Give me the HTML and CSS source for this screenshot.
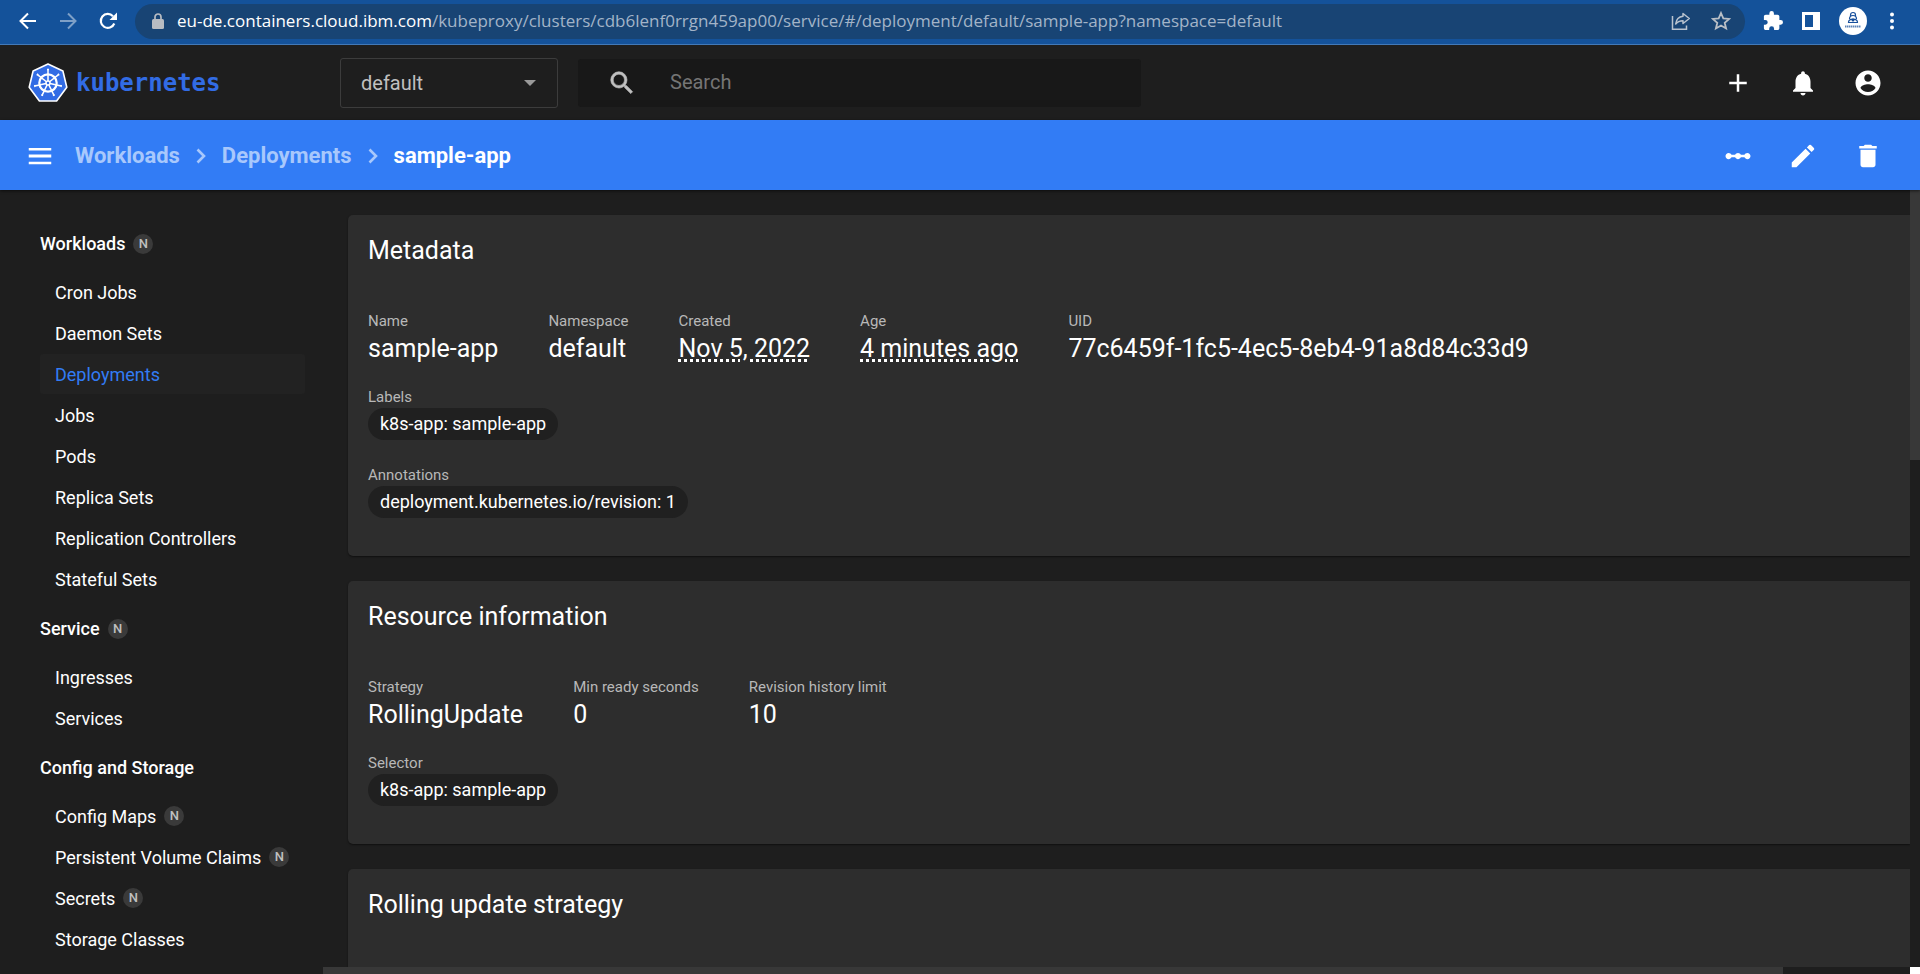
FILE: index.html
```html
<!DOCTYPE html>
<html lang="en">
<head>
<meta charset="utf-8">
<title>sample-app - Kubernetes Dashboard</title>
<link rel="stylesheet" href="styles.css">
</head>
<body>
<div class="browser">
  <div class="browser-nav">
    <button class="bare" aria-label="Back"><svg width="20" height="20" viewBox="0 0 20 20" fill="none" stroke="#fff" stroke-width="2"><path d="M18 10H3M10 2.500L2.500 10L10 17.500"/></svg></button>
    <button class="bare faded" aria-label="Forward"><svg width="20" height="20" viewBox="0 0 20 20" fill="none" stroke="#fff" stroke-width="2"><path d="M2 10H17M10 2.500L17.500 10L10 17.500"/></svg></button>
    <button class="bare" aria-label="Reload"><svg width="20" height="20" viewBox="0 0 20 20"><path d="M16.300 12.500A7 7 0 1 1 15 5.200" fill="none" stroke="#fff" stroke-width="2.200"/><path d="M19 1.500V9H11.500z" fill="#fff"/></svg></button>
  </div>
  <div class="omnibox">
    <svg width="12" height="16" viewBox="0 0 12 16"><rect y="6" width="12" height="10" rx="1.500" fill="#b8bcc2"/><path d="M3 7V4a3 3 0 0 1 6 0v3" fill="none" stroke="#b8bcc2" stroke-width="1.700"/></svg>
    <span class="url"><span class="host">eu-de.containers.cloud.ibm.com</span>/kubeproxy/clusters/cdb6lenf0rrgn459ap00/service/#/deployment/default/sample-app?namespace=default</span>
    <button class="bare" aria-label="Share"><svg width="20" height="20" viewBox="0 0 20 20" fill="none" stroke="#b9c3cf" stroke-width="1.500"><path d="M1.500 5V18.200H15.500V14.500"/><path d="M12 2.500L18.300 7.500L12 12.500V9.700C8.500 9.700 6.500 10.500 4.700 13C5.200 8.800 8 5.700 12 5.300z" stroke-linejoin="round"/></svg></button>
    <button class="bare" aria-label="Bookmark"><svg width="20" height="20" viewBox="0 0 20 20"><path d="M10 2L12.300 7.400L18.200 7.900L13.700 11.800L15.100 17.500L10 14.500L4.900 17.500L6.300 11.800L1.800 7.900L7.700 7.400z" fill="none" stroke="#b9bfc6" stroke-width="1.800"/></svg></button>
  </div>
  <div class="browser-tools">
    <button class="bare" aria-label="Extensions"><svg width="20" height="20" viewBox="1 1 22 22" fill="#fff"><path d="M20.500 11H19V7c0-1.100-.9-2-2-2h-4V3.500a2.500 2.500 0 0 0-5 0V5H4c-1.100 0-2 .9-2 2v3.800h1.500a2.700 2.700 0 0 1 0 5.400H2V20c0 1.100.9 2 2 2h3.800v-1.500a2.700 2.700 0 0 1 5.400 0V22H17c1.100 0 2-.9 2-2v-4h1.500a2.500 2.500 0 0 0 0-5z"/></svg></button>
    <button class="bare" aria-label="Side panel"><svg width="18" height="18" viewBox="0 0 18 18"><path d="M0 0H18V18H0zM3 3V15H11V3z" fill="#fff" fill-rule="evenodd"/></svg></button>
    <button class="bare" aria-label="Profile"><svg width="28" height="28" viewBox="0 0 28 28"><circle cx="14" cy="14" r="14" fill="#fff"/><path d="M11.500 9V8a2.500 2.500 0 0 1 5 0V9M10.500 12a3.500 3.500 0 0 1 7 0M9.500 15.500C9.500 11 18.500 11 18.500 15.500z" fill="none" stroke="#174f9c" stroke-width="1.200"/><circle cx="14" cy="13" r="1.500" fill="#174f9c"/><path d="M6 19.500H22" stroke="#5c83b8" stroke-width="2" stroke-dasharray="1.500 .5"/></svg></button>
    <button class="bare menu" aria-label="Menu"><svg width="6" height="18" viewBox="0 0 6 18" fill="#fff"><circle cx="3" cy="2.500" r="2"/><circle cx="3" cy="9" r="2"/><circle cx="3" cy="15.500" r="2"/></svg></button>
  </div>
</div>

<header class="header">
  <a class="brand" href="#">
    <svg width="42" height="42" viewBox="-21 -21 42 42">
      <path d="M0 -19L14.900 -12L18.800 4.200L8.600 18H-8.600L-18.800 4.200L-14.900 -12z" fill="#326ce5" stroke="#fff" stroke-width="1.600" stroke-linejoin="round"/>
      <g stroke="#fff" fill="none">
        <circle r="8.700" stroke-width="2.200"/>
        <g stroke-width="1.500"><path id="spoke" d="M0 -2V-13.500M-1 -13.500H1"/><use href="#spoke" transform="rotate(51.430)"/><use href="#spoke" transform="rotate(102.860)"/><use href="#spoke" transform="rotate(154.290)"/><use href="#spoke" transform="rotate(205.710)"/><use href="#spoke" transform="rotate(257.140)"/><use href="#spoke" transform="rotate(308.570)"/></g>
        <circle r="2" stroke-width="1.500"/>
      </g>
    </svg>
    <span>kubernetes</span>
  </a>
  <div class="select-wrap">
    <select class="namespace" aria-label="Namespace"><option>default</option></select>
    <svg class="caret" width="12" height="6" viewBox="0 0 12 6"><path d="M0 0H12L6 6z" fill="#9a9a9a"/></svg>
  </div>
  <div class="search">
    <svg width="30" height="30" viewBox="0 0 24 24" fill="#c0c0c0" stroke="#c0c0c0" stroke-width=".5"><path d="M15.500 14h-.79l-.28-.27A6.470 6.470 0 0 0 16 9.500 6.500 6.500 0 1 0 9.500 16c1.610 0 3.090-.59 4.230-1.570l.27.28v.79l5 4.990L20.490 19l-4.990-5zm-6 0C7.010 14 5 11.990 5 9.500S7.010 5 9.500 5 14 7.010 14 9.500 11.990 14 9.500 14z"/></svg>
    <input type="search" placeholder="Search" aria-label="Search">
  </div>
  <div class="actions">
    <button class="bare" aria-label="Create"><svg width="30" height="30" viewBox="0 0 24 24" fill="#fff"><path d="M19 13h-6v6h-2v-6H5v-2h6V5h2v6h6v2z"/></svg></button>
    <button class="bare" aria-label="Notifications"><svg width="30" height="30" viewBox="0 0 24 24" fill="#fff"><path d="M12 22c1.100 0 2-.9 2-2h-4c0 1.100.89 2 2 2zm6-6v-5c0-3.070-1.640-5.640-4.500-6.320V4c0-.83-.67-1.500-1.500-1.500s-1.500.67-1.500 1.500v.68C7.630 5.360 6 7.920 6 11v5l-2 2v1h16v-1l-2-2z"/></svg></button>
    <button class="bare" aria-label="Account"><svg width="30" height="30" viewBox="0 0 24 24" fill="#fff"><path d="M12 2C6.480 2 2 6.480 2 12s4.480 10 10 10 10-4.480 10-10S17.520 2 12 2zm0 3c1.660 0 3 1.340 3 3s-1.340 3-3 3-3-1.340-3-3 1.340-3 3-3zm0 14.200c-2.500 0-4.710-1.280-6-3.220.03-1.990 4-3.080 6-3.080 1.990 0 5.970 1.090 6 3.080-1.290 1.940-3.500 3.220-6 3.220z"/></svg></button>
  </div>
</header>

<div class="toolbar">
  <button class="bare" aria-label="Toggle navigation"><svg width="30" height="30" viewBox="0 0 24 24" fill="#fff"><path d="M3 18.500h18v-2H3v2zm0-5.250h18v-2.500H3v2.500zm0-7.750v2h18V5.500H3z"/></svg></button>
  <nav class="crumbs" aria-label="Breadcrumb">
    <a href="#">Workloads</a>
    <svg width="10" height="16" viewBox="0 0 10 16"><path d="M1.500 1.500L8 8L1.500 14.500" fill="none" stroke="#a8c8fc" stroke-width="2.600"/></svg>
    <a href="#">Deployments</a>
    <svg width="10" height="16" viewBox="0 0 10 16"><path d="M1.500 1.500L8 8L1.500 14.500" fill="none" stroke="#a8c8fc" stroke-width="2.600"/></svg>
    <span class="current">sample-app</span>
  </nav>
  <div class="actions">
    <button class="bare" aria-label="Scale"><svg width="30" height="30" viewBox="0 0 24 24" fill="#fff"><path d="M19.500 9.500c-1.030 0-1.900.62-2.290 1.500h-2.920c-.39-.88-1.260-1.500-2.290-1.500s-1.900.62-2.290 1.500H6.790c-.39-.88-1.260-1.500-2.290-1.500C3.120 9.500 2 10.620 2 12s1.120 2.500 2.500 2.500c1.030 0 1.900-.62 2.290-1.500h2.920c.39.88 1.260 1.500 2.290 1.500s1.900-.62 2.290-1.500h2.920c.39.88 1.260 1.500 2.290 1.500 1.380 0 2.500-1.120 2.500-2.500s-1.120-2.500-2.500-2.500z"/></svg></button>
    <button class="bare" aria-label="Edit"><svg width="30" height="30" viewBox="0 0 24 24" fill="#fff"><path d="M3 17.250V21h3.750L17.810 9.940l-3.750-3.750L3 17.250zM20.710 7.040a1 1 0 0 0 0-1.410l-2.340-2.340a1 1 0 0 0-1.410 0l-1.830 1.830 3.750 3.750 1.830-1.830z"/></svg></button>
    <button class="bare" aria-label="Delete"><svg width="30" height="30" viewBox="0 0 24 24" fill="#fff"><path d="M6 19c0 1.100.9 2 2 2h8c1.100 0 2-.9 2-2V7H6v12zM19 4h-3.500l-1-1h-5l-1 1H5v2h14V4z"/></svg></button>
  </div>
</div>

<div class="page">
  <nav class="sidebar" aria-label="Resources">
    <section>
      <a class="group" href="#">Workloads <span class="badge">N</span></a>
      <a class="item" href="#">Cron Jobs</a>
      <a class="item" href="#">Daemon Sets</a>
      <a class="item active" href="#">Deployments</a>
      <a class="item" href="#">Jobs</a>
      <a class="item" href="#">Pods</a>
      <a class="item" href="#">Replica Sets</a>
      <a class="item" href="#">Replication Controllers</a>
      <a class="item" href="#">Stateful Sets</a>
    </section>
    <section>
      <a class="group" href="#">Service <span class="badge">N</span></a>
      <a class="item" href="#">Ingresses</a>
      <a class="item" href="#">Services</a>
    </section>
    <section>
      <a class="group" href="#">Config and Storage</a>
      <a class="item" href="#">Config Maps <span class="badge">N</span></a>
      <a class="item" href="#">Persistent Volume Claims <span class="badge">N</span></a>
      <a class="item" href="#">Secrets <span class="badge">N</span></a>
      <a class="item" href="#">Storage Classes</a>
    </section>
  </nav>

  <div class="view">
    <main class="cards">
      <section class="card">
        <h2>Metadata</h2>
        <dl class="props">
          <div><dt>Name</dt><dd>sample-app</dd></div>
          <div><dt>Namespace</dt><dd>default</dd></div>
          <div><dt>Created</dt><dd><span class="hint">Nov 5, 2022</span></dd></div>
          <div><dt>Age</dt><dd><span class="hint">4 minutes ago</span></dd></div>
          <div><dt>UID</dt><dd>77c6459f-1fc5-4ec5-8eb4-91a8d84c33d9</dd></div>
        </dl>
        <dl class="tags">
          <div><dt>Labels</dt><dd><span class="chip">k8s-app: sample-app</span></dd></div>
          <div><dt>Annotations</dt><dd><span class="chip">deployment.kubernetes.io/revision: 1</span></dd></div>
        </dl>
      </section>
      <section class="card">
        <h2>Resource information</h2>
        <dl class="props">
          <div><dt>Strategy</dt><dd>RollingUpdate</dd></div>
          <div><dt>Min ready seconds</dt><dd>0</dd></div>
          <div><dt>Revision history limit</dt><dd>10</dd></div>
        </dl>
        <dl class="tags">
          <div><dt>Selector</dt><dd><span class="chip">k8s-app: sample-app</span></dd></div>
        </dl>
      </section>
      <section class="card rest">
        <h2>Rolling update strategy</h2>
      </section>
    </main>
    <div class="scroll-x"><div class="thumb"></div></div>
  </div>

  <div class="scroll-y"><div class="thumb"></div><div class="corner"></div></div>
</div>
</body>
</html>
```
FILE: styles.css
```css
* {
  box-sizing: border-box;
}

body {
  margin: 0;
  height: 100vh;
  display: flex;
  flex-direction: column;
  overflow: hidden;
  background: #1e1e1e;
  color: #fff;
  font-family: Roboto, "Liberation Sans", sans-serif;
  font-size: 18px;
}

a {
  color: inherit;
  text-decoration: none;
}

svg {
  display: block;
  flex: none;
}

.bare {
  padding: 0;
  border: 0;
  background: none;
  color: inherit;
}

/* Browser bar */
.browser {
  flex: none;
  display: flex;
  align-items: center;
  height: 45px;
  padding: 0 25px 2px 18px;
  background: #14529a;
  border-bottom: 1px solid #4279b8;
}

.browser-nav {
  display: flex;
  gap: 20px;
  margin-right: 17px;
}

.faded {
  opacity: 0.45;
}

.omnibox {
  flex: 1;
  display: flex;
  align-items: center;
  gap: 20px;
  height: 35px;
  padding: 0 14px 0 17px;
  border-radius: 18px;
  background: #184474;
}

.url {
  flex: 1;
  margin-left: -7px;
  font-family: "Open Sans", "Noto Sans", sans-serif;
  font-size: 17px;
  line-height: 24px;
  color: #a3b4c8;
  white-space: nowrap;
}

.host {
  color: #fff;
}

.browser-tools {
  display: flex;
  align-items: center;
  gap: 19px;
  margin-left: 18px;
}

.menu {
  margin-left: 3px;
}

/* Application header */
.header,
.toolbar {
  flex: none;
  display: flex;
  align-items: center;
  padding: 0 37px 0 27px;
}

.header {
  height: 75px;
}

.brand {
  display: flex;
  align-items: center;
  gap: 7px;
  width: 313px;
  color: #326ce5;
  font: bold 24px "DejaVu Sans Mono", monospace;
}

.select-wrap {
  position: relative;
  width: 218px;
  margin-right: 20px;
}

.namespace {
  appearance: none;
  width: 100%;
  height: 50px;
  padding: 0 20px;
  border: 1px solid #3c3c3c;
  border-radius: 3px;
  background: transparent;
  color: #c0c0c0;
  font: 20px Roboto, sans-serif;
}

.caret {
  position: absolute;
  right: 22px;
  top: 22px;
  pointer-events: none;
}

.search {
  flex: 0 1 563px;
  display: flex;
  align-items: center;
  gap: 33px;
  height: 48px;
  padding: 0 29px;
  border-radius: 3px;
  background: #181818;
}

.search input {
  flex: 1;
  min-width: 0;
  padding: 0 0 2px;
  border: 0;
  background: none;
  color: #fff;
  font: 20px Roboto, sans-serif;
}

.search input::placeholder {
  color: #757575;
}

.actions {
  display: flex;
  gap: 35px;
  margin-left: auto;
}

/* Breadcrumb bar */
.toolbar {
  position: relative;
  height: 70px;
  padding-top: 1px;
  padding-left: 25px;
  background: #327cf5;
  box-shadow: 0 1px 3px rgba(0, 0, 0, 0.6);
}

.crumbs {
  display: flex;
  align-items: center;
  gap: 16px;
  margin-left: 20px;
  font-size: 22px;
  font-weight: 700;
  color: #a8c8fc;
}

.current {
  color: #fff;
}

/* Page */
.page {
  flex: 1;
  min-height: 0;
  display: flex;
}

.sidebar {
  flex: none;
  width: 323px;
  padding: 25px 18px 0 40px;
  overflow: hidden;
}

.group,
.item {
  display: flex;
  align-items: center;
  gap: 8px;
}

.group {
  height: 57px;
  font-weight: 500;
}

.item {
  height: 40px;
  margin-bottom: 1px;
  padding-left: 15px;
  border-radius: 3px;
}

.active {
  background: #222;
  color: #327cf5;
}

.badge {
  width: 20px;
  height: 20px;
  border-radius: 10px;
  background: #3a3a3a;
  color: #c0c0c0;
  font-size: 13px;
  font-weight: 500;
  line-height: 20px;
  text-align: center;
}

.view {
  flex: 1;
  min-width: 0;
  display: flex;
  flex-direction: column;
}

.cards {
  flex: 1;
  min-height: 0;
  display: flex;
  flex-direction: column;
  gap: 25px;
  padding: 25px 0 0 25px;
  overflow: hidden;
}

.card {
  flex: none;
  padding: 21px 20px 38px;
  border-radius: 5px 0 0 5px;
  background: #2d2d2d;
  box-shadow: 0 1px 2px rgba(0, 0, 0, 0.5);
}

.rest {
  flex: 1;
  border-bottom-left-radius: 0;
}

h2 {
  margin: 0;
  font-size: 25px;
  font-weight: 400;
  line-height: 30px;
}

dl,
dd {
  margin: 0;
}

dt {
  color: #b8b8b8;
  font-size: 15px;
  line-height: 20px;
}

.props {
  display: flex;
  gap: 50px;
  margin-top: 45px;
}

.props dd {
  font-size: 25px;
  line-height: 35px;
}

.hint {
  text-decoration: underline dotted 3px;
  text-underline-offset: 2px;
}

.tags {
  display: flex;
  flex-direction: column;
  gap: 25px;
  margin-top: 21px;
}

.chip {
  display: inline-block;
  height: 32px;
  margin-top: 1px;
  padding: 0 12px;
  border-radius: 16px;
  background: #202020;
  line-height: 32px;
  vertical-align: top;
}

/* Scrollbars */
.scroll-x {
  flex: none;
  height: 7px;
}

.scroll-x .thumb {
  width: 92%;
  height: 100%;
  background: #383838;
}

.scroll-y {
  flex: none;
  display: flex;
  flex-direction: column;
  width: 10px;
}

.scroll-y .thumb {
  height: 34.5%;
  background: #383838;
}

.corner {
  height: 7px;
  margin-top: auto;
  background: #fff;
}
```
